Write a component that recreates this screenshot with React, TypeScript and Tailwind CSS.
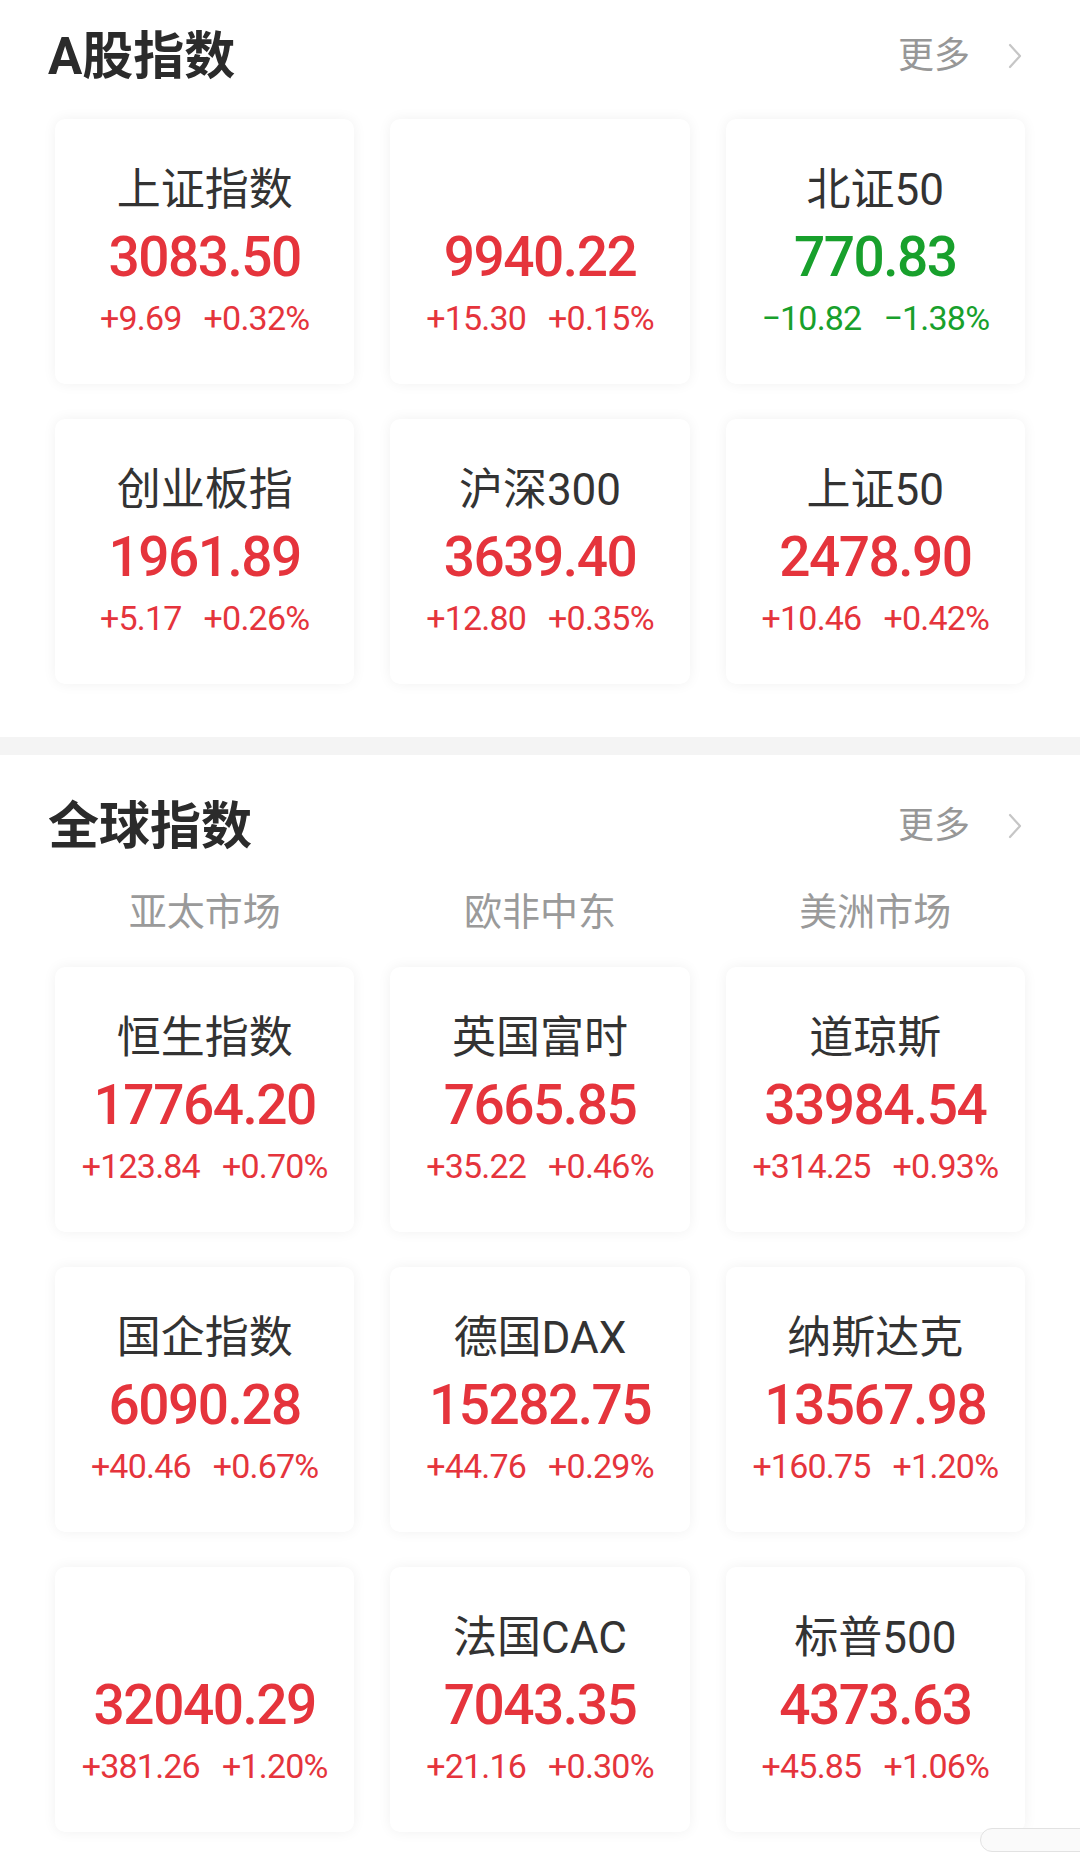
import React from "react";

type Quote = {
  name: string;
  price: string;
  change: string;
  percent: string;
  down?: boolean;
};

const aShares: Quote[] = [
  { name: "上证指数", price: "3083.50", change: "+9.69", percent: "+0.32%" },
  { name: "", price: "9940.22", change: "+15.30", percent: "+0.15%" },
  { name: "北证50", price: "770.83", change: "−10.82", percent: "−1.38%", down: true },
  { name: "创业板指", price: "1961.89", change: "+5.17", percent: "+0.26%" },
  { name: "沪深300", price: "3639.40", change: "+12.80", percent: "+0.35%" },
  { name: "上证50", price: "2478.90", change: "+10.46", percent: "+0.42%" },
];

const globalIdx: Quote[] = [
  { name: "恒生指数", price: "17764.20", change: "+123.84", percent: "+0.70%" },
  { name: "英国富时", price: "7665.85", change: "+35.22", percent: "+0.46%" },
  { name: "道琼斯", price: "33984.54", change: "+314.25", percent: "+0.93%" },
  { name: "国企指数", price: "6090.28", change: "+40.46", percent: "+0.67%" },
  { name: "德国DAX", price: "15282.75", change: "+44.76", percent: "+0.29%" },
  { name: "纳斯达克", price: "13567.98", change: "+160.75", percent: "+1.20%" },
  { name: "", price: "32040.29", change: "+381.26", percent: "+1.20%" },
  { name: "法国CAC", price: "7043.35", change: "+21.16", percent: "+0.30%" },
  { name: "标普500", price: "4373.63", change: "+45.85", percent: "+1.06%" },
];

const Chevron = () => (
  <svg width="14" height="26" viewBox="0 0 14 26" fill="none">
    <path d="M2 2 L12 13 L2 24" stroke="#c6c6c6" strokeWidth="2.2" strokeLinecap="round" strokeLinejoin="round" />
  </svg>
);

const SectionHeader = ({ title }: { title: string }) => (
  <div className="flex h-[80px] items-center justify-between pl-[48px] pr-[58px]">
    <h2 className="text-[51px] font-bold leading-none text-[#2b2b2b]">{title}</h2>
    <div className="flex items-center gap-[38px]">
      <span className="text-[36px] leading-none text-[#979797]">更多</span>
      <Chevron />
    </div>
  </div>
);

const Card = ({ q }: { q: Quote }) => {
  const color = q.down ? "text-[#18a02c]" : "text-[#e5343c]";
  return (
    <div className="flex h-[265px] flex-col items-center rounded-[10px] bg-white pt-[45px] shadow-[0_0_14px_rgba(0,0,0,0.06)]">
      <div className="h-[52px] text-[44px] leading-[52px] text-[#333333]">{q.name}</div>
      <div className={`mt-[9px] text-[55px] font-medium leading-[64px] tracking-[-1.5px] ${color}`}>
        {q.price}
      </div>
      <div className={`mt-[9px] flex gap-[22px] text-[34px] leading-[40px] tracking-[-0.8px] ${color}`}>
        <span>{q.change}</span>
        <span>{q.percent}</span>
      </div>
    </div>
  );
};

export default function App() {
  return (
    <div
      className="relative min-h-[1864px] w-[1080px] overflow-hidden bg-white"
      style={{ fontFamily: 'Roboto, "Noto Sans CJK SC", sans-serif' }}
    >
      <section className="pb-[53px]">
        <div className="pt-[16px]">
          <SectionHeader title="A股指数" />
        </div>
        <div className="mt-[23px] grid grid-cols-3 gap-x-[36px] gap-y-[35px] px-[55px]">
          {aShares.map((q, i) => (
            <Card key={i} q={q} />
          ))}
        </div>
      </section>

      <div className="h-[18px] bg-[#f4f4f4]" />

      <section>
        <div className="pt-[31px]">
          <SectionHeader title="全球指数" />
        </div>
        <div className="grid h-[92px] grid-cols-3 items-center gap-x-[36px] px-[55px] text-center text-[38px] leading-none text-[#9a9a9a]">
          <span>亚太市场</span>
          <span>欧非中东</span>
          <span>美洲市场</span>
        </div>
        <div className="mt-[9px] grid grid-cols-3 gap-x-[36px] gap-y-[35px] px-[55px]">
          {globalIdx.map((q, i) => (
            <Card key={i} q={q} />
          ))}
        </div>
      </section>

      <div className="absolute bottom-[12px] right-[-40px] h-[24px] w-[140px] rounded-full border border-[#e2e2e2] bg-[#fafafa]" />
    </div>
  );
}
